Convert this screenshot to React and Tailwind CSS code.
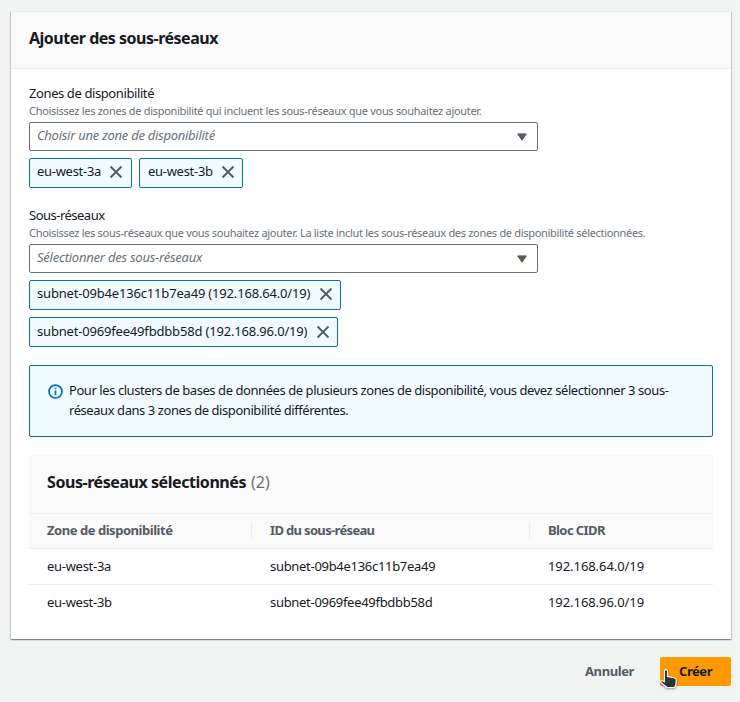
function Cross() {
  return (
    <svg className="size-4 shrink-0" viewBox="0 0 16 16" fill="none" stroke="#545b64" strokeWidth="1.8">
      <path d="M2.5 2.5 13.5 13.5M13.5 2.5 2.5 13.5" />
    </svg>
  );
}

function Select({ className, children }) {
  return (
    <div className="flex h-[29px] w-[509px] items-center justify-between rounded-xs border border-[#687078] pr-[10px] pl-[7px]">
      <span className={`pb-[2px] text-[13px] text-[#687078] italic ${className}`}>{children}</span>
      <svg className="h-2 w-[10px]" viewBox="0 0 10 8" fill="#545b64" stroke="#545b64" strokeLinejoin="round">
        <path d="M.7.9h8.6L5 7.2z" />
      </svg>
    </div>
  );
}

function Token({ box, className, children }) {
  return (
    <div className={`flex h-[30px] items-center justify-between rounded-xs border border-[#0073bb] bg-[#f1faff] ${box}`}>
      <span className={`text-[13px] whitespace-nowrap ${className}`}>{children}</span>
      <Cross />
    </div>
  );
}

function Pointer() {
  return (
    <svg className="absolute top-[11px] -left-px h-[22px] w-[22px] drop-shadow-[0_1px_1px_rgba(0,0,0,0.4)]" viewBox="0 0 22 22">
      <path
        d="M5.300 3.200c0-2 3.200-2 3.200 0v5.200l7.200 1.600c1.400.4 1.700 1.200 1.600 2.500l-.5 4.600-1.200 2.400H8L2 14.700c-1-1.300.8-2.800 2-1.800l1.300.9z"
        fill="#2e3436"
        stroke="#fff"
        strokeWidth="1.2"
        strokeLinejoin="round"
      />
    </svg>
  );
}

const columns = "grid grid-cols-[222px_278px_184px]";

const rows = [
  ["eu-west-3a", "subnet-09b4e136c11b7ea49", "192.168.64.0/19"],
  ["eu-west-3b", "subnet-0969fee49fbdbb58d", "192.168.96.0/19"],
];

export default function App() {
  return (
    <div className="h-[702px] w-[740px] bg-[#f2f3f3] pt-[11px] pr-[9px] pl-[11px] font-['Noto_Sans',sans-serif] text-[#16191f]">
      <section className="h-[628px] border-t border-[#eaeded] bg-white shadow-[0_1px_1px_0_rgba(0,28,36,0.3),1px_1px_1px_0_rgba(0,28,36,0.15),-1px_1px_1px_0_rgba(0,28,36,0.15)]">
        <header className="flex h-[57px] items-center border-b border-[#eaeded] bg-[#fafafa] px-[18px] pb-1">
          <h1 className="text-[16px] font-bold tracking-[-0.49px]">Ajouter des sous-réseaux</h1>
        </header>

        <div className="flex flex-col px-[18px] pt-[15px]">
          <div className="flex flex-col">
            <label className="h-[19px] text-[13px] leading-[18px] tracking-[-0.4px]">Zones de disponibilité</label>
            <p className="mb-[3px] h-4 text-[11px] leading-4 tracking-[-0.3px] text-[#687078]">
              Choisissez les zones de disponibilité qui incluent les sous-réseaux que vous souhaitez ajouter.
            </p>
            <Select className="tracking-[-0.27px]">Choisir une zone de disponibilité</Select>
            <div className="mt-[7px] flex gap-[7px]">
              <Token box="w-[103px] px-[7px] pb-[2px]" className="tracking-[-0.29px]">eu-west-3a</Token>
              <Token box="w-[104px] pr-[6px] pl-[8px] pb-[2px]" className="tracking-[-0.29px]">eu-west-3b</Token>
            </div>
          </div>

          <div className="mt-[18px] flex flex-col">
            <label className="h-[19px] text-[13px] leading-[18px] tracking-[-0.51px]">Sous-réseaux</label>
            <p className="mb-[3px] h-4 text-[11px] leading-4 tracking-[-0.305px] text-[#687078]">
              Choisissez les sous-réseaux que vous souhaitez ajouter. La liste inclut les sous-réseaux des zones de disponibilité sélectionnées.
            </p>
            <Select className="tracking-[-0.23px]">Sélectionner des sous-réseaux</Select>
            <div className="mt-[7px] flex flex-col gap-[7px]">
              <Token box="w-[312px] pr-[6px] pl-[7px] pb-[2px]" className="tracking-[-0.18px]">subnet-09b4e136c11b7ea49 (192.168.64.0/19)</Token>
              <Token box="w-[309px] pr-[6px] pl-[7px] pb-px" className="tracking-[-0.18px]">subnet-0969fee49fbdbb58d (192.168.96.0/19)</Token>
            </div>
          </div>

          <div className="mt-[18px] flex h-[72px] gap-[6px] rounded-xs border border-[#0073bb] bg-[#f1faff] pt-[14px] pl-[18px]">
            <svg className="mt-[4px] size-[15px] shrink-0" viewBox="0 0 16 16" fill="none" stroke="#0073bb" strokeWidth="1.9">
              <circle cx="8" cy="8" r="6.900" />
              <path d="M8 12V6.900M8 5.700V3.900" />
            </svg>
            <p className="text-[13px] leading-5 tracking-[-0.435px] whitespace-nowrap">
              Pour les clusters de bases de données de plusieurs zones de disponibilité, vous devez sélectionner 3 sous-
              <br />
              réseaux dans 3 zones de disponibilité différentes.
            </p>
          </div>

          <div className="mt-[18px] flex flex-col">
            <div className="flex h-[59px] items-center gap-[5px] border-b border-[#eaeded] bg-[#fafafa] px-[18px] pb-1 text-[16px]">
              <h2 className="font-bold tracking-[-0.44px]">Sous-réseaux sélectionnés</h2>
              <span className="text-[#687078]">(2)</span>
            </div>
            <div className={`${columns} h-[35px] items-center border-b border-[#eaeded] bg-[#fafafa] text-[13px] font-bold text-[#545b64]`}>
              <div className="pl-[18px] tracking-[-0.46px]">Zone de disponibilité</div>
              <div className="flex h-[18px] items-center border-l border-[#eaeded] pl-[18px] tracking-[-0.66px]">ID du sous-réseau</div>
              <div className="flex h-[18px] items-center border-l border-[#eaeded] pl-[18px] tracking-[-0.58px]">Bloc CIDR</div>
            </div>
            {rows.map(([zone, id, cidr]) => (
              <div key={id} className={`${columns} h-9 items-center border-b border-[#eaeded] text-[13px] last:border-b-0`}>
                <div className="pl-[18px] tracking-[-0.29px]">{zone}</div>
                <div className="pl-[19px] tracking-[-0.3px]">{id}</div>
                <div className="pl-[19px] tracking-[-0.07px]">{cidr}</div>
              </div>
            ))}
          </div>
        </div>
      </section>

      <div className="mt-[18px] flex h-[29px] items-center justify-end gap-[26px] text-[13px] font-bold">
        <button className="tracking-[-0.4px] text-[#545b64]">Annuler</button>
        <button className="relative h-[29px] w-[71px] rounded-xs bg-[#ff9900] tracking-[-0.44px]">
          Créer
          <Pointer />
        </button>
      </div>
    </div>
  );
}
